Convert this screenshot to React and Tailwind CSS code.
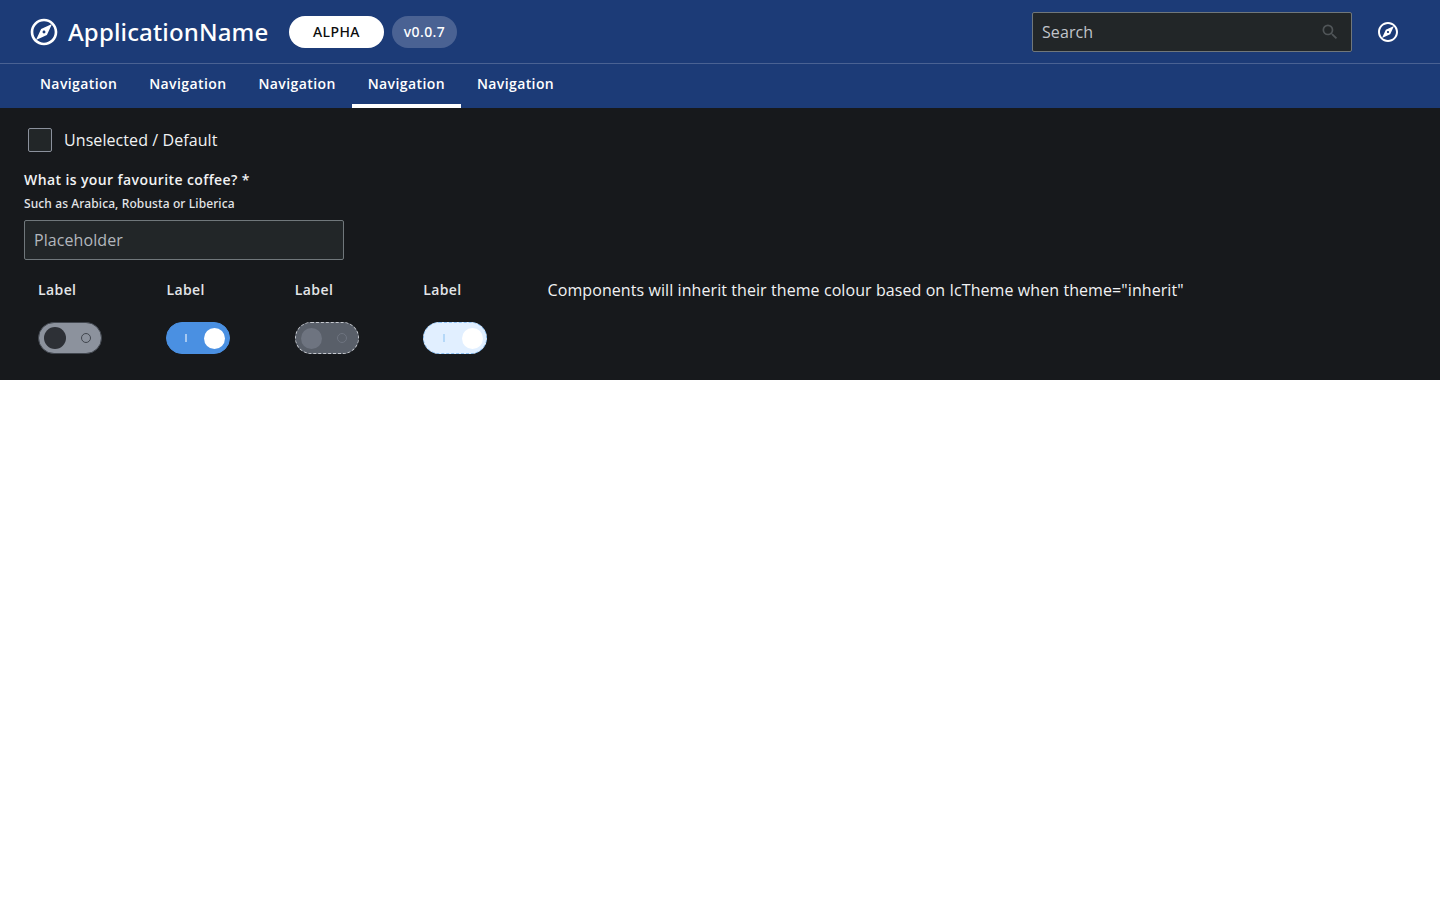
const COMPASS =
  "M12 10.9c-.61 0-1.1.49-1.1 1.1s.49 1.1 1.1 1.1c.61 0 1.1-.49 1.1-1.1s-.49-1.1-1.1-1.1zM12 2C6.48 2 2 6.48 2 12s4.48 10 10 10 10-4.48 10-10S17.52 2 12 2zm0 18c-4.41 0-8-3.59-8-8s3.59-8 8-8 8 3.59 8 8-3.59 8-8 8zm2.19-5.81L6 18l3.81-8.19L18 6l-3.81 8.19z";

function Compass({ className }) {
  return (
    <svg viewBox="0 0 24 24" fill="currentColor" className={className}>
      <path d={COMPASS} />
    </svg>
  );
}

function NavItem({ selected }) {
  return (
    <a
      className={
        "flex h-11 items-start border-b-4 px-4 pt-2 text-sm leading-6 font-semibold tracking-[0.4px] " +
        (selected ? "border-white" : "border-transparent")
      }
    >
      Navigation
    </a>
  );
}

function Switch({ track, thumb, on, mark }) {
  return (
    <div className="flex w-[128.4px] flex-col gap-5">
      <span className="text-sm leading-6 font-semibold tracking-[0.4px] text-[#e3e5e8]">Label</span>
      <span className={"flex h-8 w-16 items-center rounded-full border " + track}>
        {on ? (
          <>
            <span className={"ml-[18px] h-2 w-0.5 " + mark} />
            <span className={"ml-[17px] size-[21px] rounded-full " + thumb} />
          </>
        ) : (
          <>
            <span className={"rounded-full " + thumb} />
            <span className={"size-2.5 rounded-full border " + mark} />
          </>
        )}
      </span>
    </div>
  );
}

export default function App() {
  return (
    <div className="min-h-screen bg-white font-['Open_Sans',sans-serif] text-white">
      <header className="bg-[#1c3b77]">
        <div className="flex h-16 items-center border-b border-[#4a6293] pr-10 pl-7">
          <Compass className="size-8" />
          <h1 className="ml-2 w-[201px] font-['Noto_Sans',sans-serif] text-2xl leading-8 font-medium tracking-[0.14px] whitespace-nowrap">
            ApplicationName
          </h1>
          <span className="ml-5 flex h-8 w-[95px] items-center justify-center rounded-full bg-white font-['Noto_Sans',sans-serif] text-sm font-medium tracking-[0.42px] text-[#0b0c0c]">
            ALPHA
          </span>
          <span className="ml-2 flex h-8 w-[65px] items-center justify-center rounded-full bg-[#4a6293] font-['Noto_Sans',sans-serif] text-sm font-medium tracking-[0.42px]">
            v0.0.7
          </span>
          <div className="ml-auto flex h-10 w-80 items-center justify-between rounded-xs border border-[#70777b] bg-[#222628] pr-[11px] pl-[9px]">
            <span className="text-base tracking-[0.08px] text-[#c0c4ca]">Search</span>
            <svg viewBox="0 0 24 24" fill="#505558" className="size-5">
              <path d="M15.5 14h-.79l-.28-.27A6.471 6.471 0 0 0 16 9.5 6.5 6.5 0 1 0 9.5 16c1.61 0 3.09-.59 4.23-1.57l.27.28v.79l5 4.99L20.49 19l-4.99-5zm-6 0C7.01 14 5 11.99 5 9.5S7.01 5 9.5 5 14 7.01 14 9.5 11.99 14 9.5 14z" />
            </svg>
          </div>
          <Compass className="ml-6 size-6" />
        </div>
        <nav className="flex px-6">
          <NavItem />
          <NavItem />
          <NavItem />
          <NavItem selected />
          <NavItem />
        </nav>
      </header>
      <main className="h-[272px] bg-[#17191c] px-6 pt-5 text-[#f1f2f3]">
        <div className="ml-1 flex h-6 items-center gap-3">
          <span className="size-6 rounded-xs border border-[#8b919c] bg-[#222628]" />
          <span className="text-base tracking-[0.08px]">Unselected / Default</span>
        </div>
        <div className="mt-4 text-sm leading-6 font-semibold tracking-[0.4px]">What is your favourite coffee? *</div>
        <div className="font-['Noto_Sans',sans-serif] text-xs leading-6 font-medium tracking-[0.11px] text-[#e3e5e8]">
          Such as Arabica, Robusta or Liberica
        </div>
        <div className="mt-1 flex h-10 w-80 items-center rounded-xs border border-[#70777b] bg-[#222628] pl-[9px] text-base tracking-[0.08px] text-[#b3b7bd]">
          Placeholder
        </div>
        <div className="mt-[18px] ml-3.5 flex">
          <Switch track="border-[#41464e] bg-[#8c929d]" thumb="ml-[5px] size-[22px] bg-[#2d3036]" mark="ml-[15px] border-[#41464e]" />
          <Switch on track="border-[#4a90e2] bg-[#4a90e2]" thumb="bg-white" mark="bg-[#a5c8f1]" />
          <Switch track="border-dashed border-[#c6c9cf] bg-[#595f69]" thumb="ml-[5px] size-[21px] bg-[#6e7480]" mark="ml-[15px] border-[#6e7480]" />
          <Switch on track="border-dashed border-[#8ec2f5] bg-[#e1efff] pl-[0.6px]" thumb="bg-white" mark="bg-[#b5d8f8]" />
          <span className="-ml-[4px] text-base leading-6 tracking-[0.08px] whitespace-nowrap">
            Components will inherit their theme colour based on IcTheme when theme="inherit"
          </span>
        </div>
      </main>
    </div>
  );
}
